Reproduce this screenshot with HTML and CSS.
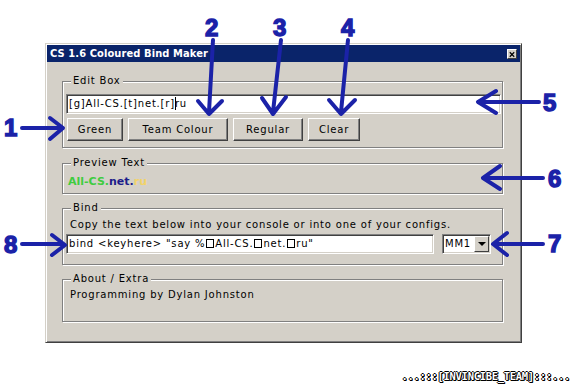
FILE: index.html
```html
<!DOCTYPE html>
<html lang="en">
<head>
    <meta charset="UTF-8">
    <title>CS 1.6 Coloured Bind Maker</title>
    <link rel="stylesheet" href="styles.css">
</head>
<body>
    <div class="page">
        <div class="window">
            <div class="titlebar">
                <span class="title">CS 1.6 Coloured Bind Maker</span>
                <span class="close">
                    <svg width="9" height="9" viewBox="0 0 9 9">
                        <path d="M2 2 L7 7 M7 2 L2 7" stroke="#000" stroke-width="1.3"/>
                    </svg>
                </span>
            </div>
            <div class="content">
                <div class="group group-edit">
                    <span class="group-label">Edit Box</span>
                    <div class="field edit-field">[g]All-CS.[t]net.[r]<span class="caret"></span>ru</div>
                    <div class="buttons">
                        <button class="btn btn-green">Green</button>
                        <button class="btn btn-team">Team Colour</button>
                        <button class="btn btn-regular">Regular</button>
                        <button class="btn btn-clear">Clear</button>
                    </div>
                </div>

                <div class="group group-preview">
                    <span class="group-label">Preview Text</span>
                    <div class="preview"><span class="c-green">All-CS.</span><span class="c-team">net.</span><span class="c-yellow">ru</span></div>
                </div>

                <div class="group group-bind">
                    <span class="group-label">Bind</span>
                    <div class="bind-desc">Copy the text below into your console or into one of your configs.</div>
                    <div class="bind-row">
                        <div class="field bind-field">bind &lt;keyhere&gt; "say %<span class="ctl"></span>All-CS.<span class="ctl"></span>net.<span class="ctl"></span>ru"</div>
                        <div class="combo">
                            <span class="combo-value">MM1</span>
                            <span class="combo-btn"><span class="down"></span></span>
                        </div>
                    </div>
                </div>

                <div class="group group-about">
                    <span class="group-label">About / Extra</span>
                    <div class="about-text">Programming by Dylan Johnston</div>
                </div>
            </div>
        </div>
        <div class="credit">...:::[INVINCIBE_TEAM]:::...</div>
    </div>

    <!-- callout arrows drawn over the screenshot -->
    <svg class="notes" width="576" height="385" viewBox="0 0 576 385">
        <g class="note-lines">
            <path d="M22 128 L62 128 M50 118 L63 128 L50 139"/>
            <path d="M213 40 L209 112 M198 101 L209 114 L222 101"/>
            <path d="M281 40 L273 112 M262 98 L273 114 L286 97"/>
            <path d="M348 40 L341 112 M329 100 L341 114 L355 100"/>
            <path d="M539 102 L479 102 M496 91 L478 102 L496 113"/>
            <path d="M543 178 L484 178 M500 166 L483 178 L500 189"/>
            <path d="M543 244 L494 244 M507 233 L493 244 L507 255"/>
            <path d="M22 244 L63 244 M52 235 L65 245 L52 255"/>
        </g>
        <g class="note-nums">
            <text x="4" y="136">1</text>
            <text x="205" y="36">2</text>
            <text x="273" y="36">3</text>
            <text x="341" y="36">4</text>
            <text x="543" y="111">5</text>
            <text x="548" y="187">6</text>
            <text x="548" y="252">7</text>
            <text x="4" y="253">8</text>
        </g>
    </svg>
</body>
</html>
```

FILE: styles.css
```css
* {
    box-sizing: border-box;
}
body {
    margin: 0;
    width: 576px;
    height: 385px;
    overflow: hidden;
    position: relative;
    background: #fff;
    font-family: "DejaVu Sans", Verdana, sans-serif;
    font-size: 10px;
    letter-spacing: 0.8px;
    color: #000;
}
.page {
    padding: 43px 0 0 45px;
}

/* classic window frame */
.window {
    width: 477px;
    height: 300px;
    padding: 1px;
    background: #d4d0c8;
    border: 1px solid;
    border-color: #d4d0c8 #404040 #404040 #d4d0c8;
    box-shadow: inset 1px 1px #fff, inset -1px -1px #808080;
}
.titlebar {
    height: 17px;
    padding: 0 3px;
    display: flex;
    align-items: center;
    justify-content: space-between;
    background: #0a246a;
    color: #fff;
    font-family: "DejaVu Sans Condensed", "DejaVu Sans", sans-serif;
    font-stretch: condensed;
    font-weight: bold;
    font-size: 11px;
    letter-spacing: 0.1px;
}
.close {
    width: 10px;
    height: 10px;
    display: flex;
    background: #d4d0c8;
    border: 1px solid;
    border-color: #fff #404040 #404040 #fff;
}
.close svg {
    display: block;
}
.content {
    padding: 19px 17px 0 15px;
}

/* group boxes */
.group {
    position: relative;
    border: 1px solid #808080;
    box-shadow: inset 1px 1px #fff, 1px 1px #fff;
}
.group-label {
    position: absolute;
    top: -7px;
    left: 8px;
    padding: 0 2px;
    line-height: 12px;
    background: #d4d0c8;
}
.group-edit {
    padding: 12px 1px 6px 3px;
}
.group-preview {
    margin-top: 15px;
    padding: 11px 3px 4px 5px;
}
.group-bind {
    margin-top: 14px;
    padding: 10px 1px 10px 3px;
}
.group-about {
    margin-top: 14px;
    padding: 9px 3px 20px 7px;
}

/* sunken edit fields */
.field {
    height: 20px;
    padding: 0 2px;
    line-height: 18px;
    white-space: nowrap;
    overflow: hidden;
    background: #fff;
    border: 1px solid;
    border-color: #808080 #fff #fff #808080;
    box-shadow: inset 1px 1px #404040, inset -1px -1px #d4d0c8;
}
.caret {
    display: inline-block;
    width: 1px;
    height: 13px;
    margin-right: -1px;
    vertical-align: -3px;
    background: #000;
}

.buttons {
    display: flex;
    gap: 5px;
    margin-top: 4px;
    padding-left: 1px;
}
.btn {
    height: 23px;
    padding: 0;
    font: inherit;
    letter-spacing: inherit;
    color: #000;
    background: #d4d0c8;
    border: 1px solid;
    border-color: #fff #404040 #404040 #fff;
    box-shadow: inset -1px -1px #808080;
}
.btn-green { width: 56px; }
.btn-team { width: 100px; }
.btn-regular { width: 70px; }
.btn-clear { width: 52px; }

.preview {
    line-height: 14px;
    font-size: 11px;
    font-weight: bold;
    letter-spacing: 0;
}
.c-green { color: #3fcc3f; }
.c-team { color: #1c1c8a; }
.c-yellow { color: #f2d36a; }

.bind-desc {
    padding-left: 4px;
    line-height: 12px;
}
.bind-row {
    display: flex;
    gap: 8px;
    margin-top: 3px;
}
.bind-field {
    width: 368px;
}
.ctl {
    display: inline-block;
    width: 8px;
    height: 9px;
    margin: 0 1px;
    vertical-align: -1px;
    border: 1px solid #000;
}
.combo {
    width: 49px;
    height: 20px;
    display: flex;
    background: #fff;
    border: 1px solid;
    border-color: #808080 #fff #fff #808080;
    box-shadow: inset 1px 1px #404040, inset -1px -1px #d4d0c8;
}
.combo-value {
    flex: 1;
    padding-left: 2px;
    line-height: 18px;
}
.combo-btn {
    width: 15px;
    height: 16px;
    margin: 1px;
    display: flex;
    align-items: center;
    justify-content: center;
    background: #d4d0c8;
    border: 1px solid;
    border-color: #fff #404040 #404040 #fff;
}
.down {
    width: 0;
    height: 0;
    border-left: 4px solid transparent;
    border-right: 4px solid transparent;
    border-top: 4px solid #000;
}

.about-text {
    line-height: 12px;
}

.credit {
    margin-top: 28px;
    padding-right: 6px;
    text-align: right;
    font-family: "DejaVu Sans Mono", monospace;
    font-size: 10.5px;
    font-weight: bold;
    line-height: 10px;
    letter-spacing: -0.3px;
    color: #fff;
    text-shadow: 1px 0 #000, -1px 0 #000, 0 1px #000, 0 -1px #000, 1px 1px #000;
}

/* annotation overlay */
.notes {
    position: absolute;
    top: 0;
    left: 0;
    pointer-events: none;
}
.note-lines path {
    fill: none;
    stroke: #1b22a8;
    stroke-width: 4;
    stroke-linecap: round;
    stroke-linejoin: round;
}
.note-nums text {
    font-family: "Liberation Sans", Arial, sans-serif;
    font-size: 24px;
    font-weight: bold;
    fill: #1b22a8;
    stroke: #1b22a8;
    stroke-width: 1.4;
}
```
